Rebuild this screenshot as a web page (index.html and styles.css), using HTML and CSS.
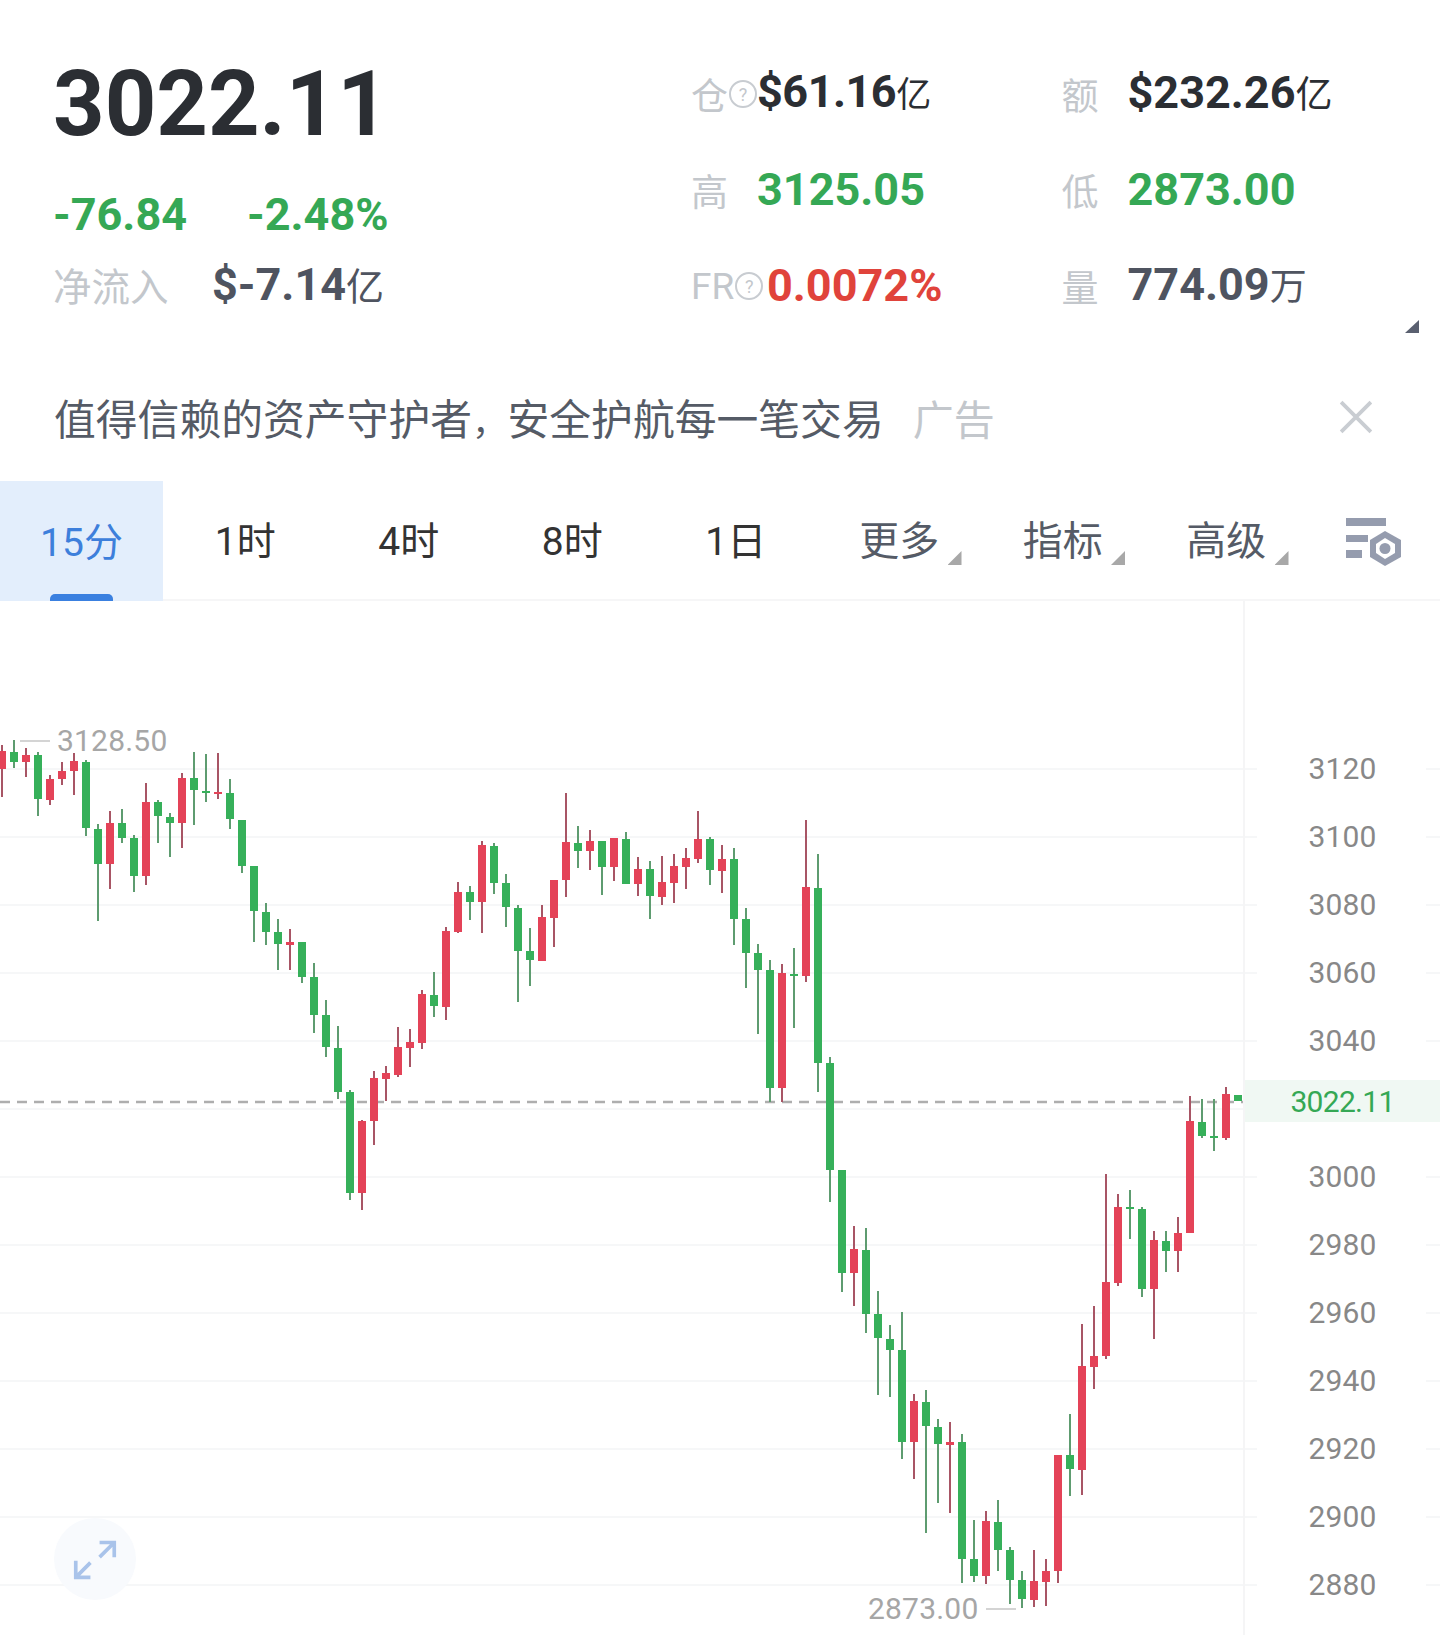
FILE: index.html
```html
<!DOCTYPE html>
<html lang="zh">
<head>
<meta charset="utf-8">
<title>行情</title>
<link rel="stylesheet" href="styles.css">
</head>
<body>
<main class="page">
  <header class="top">
    <section class="left">
      <div class="big">3022.11</div>
      <div class="change"><span class="chg-a">-76.84</span><span>-2.48%</span></div>
      <div class="flow"><span class="flow-label">净流入</span><span class="val slate">$-7.14<small>亿</small></span></div>
    </section>
    <section class="stats">
      <div class="stat"><span class="lab">仓<i class="q">?</i></span><span class="val dark tight">$61.16<small>亿</small></span></div>
      <div class="stat"><span class="lab">额</span><span class="val dark">$232.26<small>亿</small></span></div>
      <div class="stat"><span class="lab">高</span><span class="val green">3125.05</span></div>
      <div class="stat"><span class="lab">低</span><span class="val green">2873.00</span></div>
      <div class="stat"><span class="lab fr">FR<i class="q">?</i></span><span class="val red">0.0072%</span></div>
      <div class="stat"><span class="lab">量</span><span class="val slate">774.09<small>万</small></span></div>
    </section>
    <span class="corner"></span>
  </header>

  <div class="banner">
    <span class="ad-text">值得信赖的资产守护者<span class="comma">，</span>安全护航每一笔交易</span>
    <span class="ad-tag">广告</span>
    <svg class="close" viewBox="0 0 32 32" aria-label="关闭"><path d="M2 2L30 30M30 2L2 30"/></svg>
  </div>

  <nav class="tabs">
    <a class="tab active">15分</a>
    <a class="tab">1时</a>
    <a class="tab">4时</a>
    <a class="tab">8时</a>
    <a class="tab">1日</a>
    <a class="tab menu">更多</a>
    <a class="tab menu">指标</a>
    <a class="tab menu">高级</a>
    <span class="tool">
      <svg class="tool-icon" viewBox="0 0 56 48">
        <path class="tool-bar" d="M0 0H40V8H0ZM0 17H22V24H0ZM0 32H16V40H0Z"/>
        <path class="tool-nut" d="M39 13L55 22V39L39 48L24 39V22Z"/>
        <path class="tool-hole" d="M39 20L49 26V35L39 41L30 35V26Z"/>
        <circle class="tool-dot" cx="39" cy="30.500" r="5.500"/>
      </svg>
    </span>
  </nav>

  <section class="chart">
    <svg class="plot" viewBox="0 600 1440 1035" preserveAspectRatio="none">
      <path class="grid" d="M0 768H1257M1426 768H1440M0 836H1257M1426 836H1440M0 904H1257M1426 904H1440M0 972H1257M1426 972H1440M0 1040H1257M1426 1040H1440M0 1108H1257M1426 1108H1440M0 1176H1257M1426 1176H1440M0 1244H1257M1426 1244H1440M0 1312H1257M1426 1312H1440M0 1380H1257M1426 1380H1440M0 1448H1257M1426 1448H1440M0 1516H1257M1426 1516H1440M0 1584H1257M1426 1584H1440"/>
      <path class="last" d="M0 1101H1243"/>
      <g transform="translate(0 -1)">
      <path class="wick-g" d="M14 740V768M38 752V816M86 760V836M98 824V921M122 809V843M134 835V892M158 800V843M170 813V857M194 752V825M206 754V802M230 779V829M242 820V873M254 866V942M266 903V945M278 919V970M302 942V983M314 963V1033M326 1000V1057M338 1026V1099M350 1090V1200M434 972V1017M470 886V920M494 843V894M506 874V927M518 905V1002M530 928V986M578 826V868M602 841V895M626 832V884M650 861V919M710 837V885M734 848V945M746 908V988M758 944V1034M770 960V1102M794 948V1028M818 854V1092M830 1057V1202M842 1170V1292M866 1228V1333M878 1291V1395M890 1325V1397M902 1312V1459M926 1390V1533M938 1419V1503M962 1434V1583M974 1520V1582M998 1500V1571M1010 1547V1604M1022 1571V1608M1070 1414V1496M1130 1190V1239M1142 1207V1297M1166 1231V1272M1202 1099V1138M1214 1099V1151"/>
      <path class="wick-r" d="M2 745V797M26 748V777M50 775V805M62 762V785M74 753V795M110 811V889M146 783V885M182 773V848M218 753V799M290 929V970M362 1120V1210M374 1071V1145M386 1066V1101M398 1027V1077M410 1029V1067M422 990V1049M446 927V1020M458 882V933M482 841V933M542 905V961M554 880V947M566 793V897M590 830V870M614 838V881M638 857V896M662 856V905M674 854V903M686 848V889M698 811V863M722 845V893M782 964V1102M806 820V982M854 1226V1306M914 1394V1479M950 1422V1513M986 1511V1584M1034 1550V1607M1046 1559V1606M1058 1455V1583M1082 1324V1495M1094 1306V1389M1106 1174V1359M1118 1194V1286M1154 1231V1339M1178 1217V1272M1190 1096V1233M1226 1087V1140"/>
      <path class="body-g" d="M14 752V762M38 755V799M86 762V828M98 829V864M122 823V838M134 838V876M158 802V816M170 817V823M194 778V790M206 791V793M230 793V819M242 820V866M254 866V911M266 912V932M278 932V944M302 942V977M314 977V1015M326 1015V1047M338 1048V1092M350 1092V1193M434 995V1006M470 892V902M494 846V883M506 883V907M518 908V951M530 951V960M578 843V851M602 841V867M626 839V884M650 869V896M710 839V870M734 859V919M746 919V953M758 953V970M770 970V1088M794 974V976M818 888V1063M830 1063V1170M842 1170V1273M866 1250V1314M878 1314V1338M890 1339V1350M902 1350V1442M926 1402V1426M938 1427V1444M962 1442V1559M974 1559V1576M998 1522V1550M1010 1550V1580M1022 1580V1599M1070 1455V1469M1130 1207V1209M1142 1209V1289M1166 1241V1251M1202 1122V1136M1214 1136V1138M1238 1095V1101"/>
      <path class="body-r" d="M2 751V769M26 755V762M50 779V800M62 771V779M74 761V771M110 823V864M146 802V876M182 778V823M218 792V794M290 942V945M362 1121V1193M374 1078V1121M386 1073V1079M398 1047V1075M410 1042V1048M422 994V1043M446 931V1007M458 892V932M482 845V902M542 917V961M554 880V918M566 842V880M590 841V851M614 838V867M638 869V884M662 882V897M674 866V883M686 858V867M698 839V859M722 859V871M782 973V1088M806 887V976M854 1249V1273M914 1401V1442M950 1442V1445M986 1521V1576M1034 1581V1600M1046 1571V1582M1058 1455V1571M1082 1366V1470M1094 1356V1367M1106 1282V1356M1118 1207V1283M1154 1240V1289M1178 1233V1251M1190 1121V1233M1226 1094V1138"/>
      </g>
    </svg>

    <div class="extreme high"><span class="tick-line"></span><span>3128.50</span></div>
    <div class="extreme low"><span>2873.00</span><span class="tick-line"></span></div>

    <button class="expand" aria-label="全屏">
      <svg viewBox="0 0 48 48"><path d="M29 6H45V22M45 6L29 22M3 26V44H19M3 44L19 28"/></svg>
    </button>

    <div class="spacer"></div>
    <aside class="axis">
      <span class="y">3120</span><span class="y">3100</span><span class="y">3080</span><span class="y">3060</span><span class="y">3040</span><span class="y"></span><span class="y">3000</span><span class="y">2980</span><span class="y">2960</span><span class="y">2940</span><span class="y">2920</span><span class="y">2900</span><span class="y">2880</span>
      <div class="now">3022.11</div>
    </aside>
  </section>
</main>
</body>
</html>
```
FILE: styles.css
```css
* { box-sizing: border-box; }
html, body { margin: 0; padding: 0; background: #fff; }
body { font-family: Roboto, "Noto Sans CJK SC", sans-serif; }
.page { width: 1440px; height: 1635px; overflow: hidden; background: #fff; display: flex; flex-direction: column; }

.top { position: relative; display: flex; height: 358px; flex: none; padding-left: 53px; }
.left { width: 638px; flex: none; padding-top: 59px; }
.big { font-size: 90px; line-height: 92px; font-weight: 700; color: #2b2e33; }
.change { display: flex; margin-top: 39px; font-size: 45px; line-height: 50px; font-weight: 700; color: #35a855; }
.chg-a { width: 194px; }
.flow { display: flex; align-items: center; margin-top: 21px; height: 50px; }
.flow-label { width: 159px; padding-bottom: 4px; font-size: 38.500px; white-space: nowrap; color: #c3c7cc; }
.flow .val small { font-size: 38px; }

.stats { flex: 1; display: grid; grid-template-columns: 370.500px 1fr; grid-auto-rows: 96px; padding-top: 46px; align-content: start; }
.stat { display: flex; align-items: center; }
.lab { display: flex; align-items: center; min-width: 66px; font-size: 37px; color: #c3c7cc; }
.lab.fr { min-width: 76px; }
.q { display: flex; align-items: center; justify-content: center; width: 28px; height: 28px; margin-left: 1px; border: 2px solid #c8ccd1; border-radius: 50%; font-size: 18px; font-style: normal; color: #c3c7cc; }
.val { font-size: 45px; line-height: 50px; font-weight: 700; white-space: nowrap; }
.val small { font-size: 37px; font-weight: 400; }
.val.tight { letter-spacing: -0.500px; }
.val.tight small { font-size: 35px; }
.dark { color: #2b2e33; }
.slate { color: #4f5460; }
.green { color: #35a855; }
.red { color: #e0433b; }
.corner { position: absolute; left: 1405px; top: 320px; width: 14px; height: 13px; background: #5a6070; clip-path: polygon(100% 0, 100% 100%, 0 100%); }

.banner { display: flex; align-items: center; flex: none; height: 123px; padding: 0 67px 5px 54px; }
.ad-text { font-size: 41.800px; color: #555b66; white-space: nowrap; }
.comma { font-size: 35.500px; }
.ad-tag { margin-left: 29px; font-size: 41px; color: #c3c7cc; white-space: nowrap; }
.close { width: 34px; height: 34px; margin-left: auto; fill: none; stroke: #c9cdd2; stroke-width: 3.5; }

.tabs { display: flex; flex: none; height: 120px; border-bottom: 2px solid #f6f6f7; }
.tab { position: relative; display: flex; align-items: center; justify-content: center; width: 163.500px; flex: none; padding-bottom: 4px; font-size: 39px; color: #333; }
.tab.active { width: 163px; margin-right: 0.500px; margin-bottom: -2px; background: #e3eefc; color: #3d7fdb; }
.tab.active::after { content: ""; position: absolute; left: 50px; bottom: 0; width: 63px; height: 7px; border-radius: 5px 5px 0 0; background: #3a80e0; }
.tab.menu { font-size: 40px; color: #555b66; }
.tab.menu::after { content: ""; position: absolute; left: 130px; top: 70px; width: 14px; height: 14px; background: #a8a8a8; clip-path: polygon(100% 0, 100% 100%, 0 100%); }
.tool { flex: 1; display: flex; align-items: flex-start; padding: 37px 0 0 38px; }
.tool-icon { display: block; width: 56px; height: 48px; overflow: visible; }
.tool-bar, .tool-nut, .tool-dot { fill: #959cae; }
.tool-hole { fill: #fff; }

.chart { position: relative; flex: 1; display: flex; min-height: 0; }
.plot { position: absolute; left: 0; top: 0; width: 1440px; height: 1035px; }
.grid { fill: none; stroke: #f4f5f6; stroke-width: 1.500; }
.last { fill: none; stroke: #aeaeae; stroke-width: 2.500; stroke-dasharray: 10 7; }
.wick-g { fill: none; stroke: #5e9c70; stroke-width: 2; }
.wick-r { fill: none; stroke: #a85565; stroke-width: 2; }
.body-g { fill: none; stroke: #36b05a; stroke-width: 8; }
.body-r { fill: none; stroke: #e44358; stroke-width: 8; }

.extreme { position: absolute; display: flex; align-items: center; font-size: 30px; line-height: 36px; letter-spacing: 0.200px; color: #a6a6a6; }
.high { left: 20px; top: 122px; }
.low { left: 868px; top: 990px; }
.tick-line { display: block; width: 30px; height: 2px; background: #d4d4d4; }
.high .tick-line { margin-right: 7px; }
.low .tick-line { margin-left: 8px; }

.expand { position: absolute; left: 54px; top: 917px; width: 82px; height: 82px; padding: 0; border: 0; border-radius: 50%; background: #f8fafd; display: flex; align-items: center; justify-content: center; }
.expand svg { width: 44px; height: 44px; fill: none; stroke: #a9c3ea; stroke-width: 4; }

.spacer { flex: 1; }
.axis { position: relative; width: 197px; flex: none; display: flex; flex-direction: column; padding-top: 133px; border-left: 2px solid #f5f5f6; }
.y { display: flex; align-items: center; justify-content: center; height: 68px; flex: none; font-size: 30px; letter-spacing: 0.200px; color: #888; }
.now { position: absolute; left: 0; right: 0; top: 479px; height: 42px; display: flex; align-items: center; justify-content: center; background: #f0f8f3; font-size: 30px; letter-spacing: -0.700px; color: #35a855; }
```
